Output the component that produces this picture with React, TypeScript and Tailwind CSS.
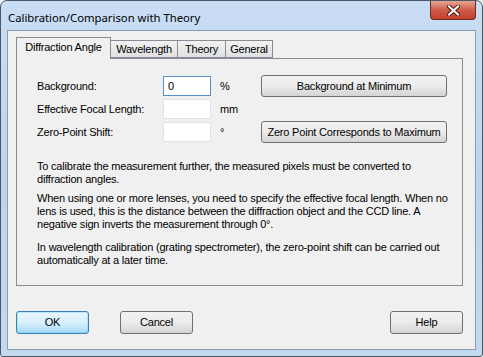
export default function App() {
  const tabs = [
    { label: "Wavelength", w: "w-[67px]" },
    { label: "Theory", w: "w-[48px]" },
    { label: "General", w: "w-[47px]" },
  ];

  return (
    <div className="w-[483px] h-[357px] bg-[#f0f0f0] font-['Liberation_Sans',Arial,sans-serif]">
      <div className="w-[483px] h-[357px] flex flex-col border border-[#4a5866] rounded-t-[7px] rounded-b-[3px] bg-gradient-to-b from-[#c9def5] via-[#bcd4ee] to-[#c3d9f0] px-[6px] pb-[6px]">
        {/* title bar */}
        <div className="h-[29px] flex items-start relative">
          <span className="pt-[9px] pl-[1px] text-[11.3px] leading-[15px] text-black font-['Noto_Sans',sans-serif]">
            Calibration/Comparison with Theory
          </span>
          <div className="absolute right-[0px] top-0 w-[46px] h-[19px] rounded-b-[4px] border border-t-0 border-[#6b2a22] bg-gradient-to-b from-[#e3a594] via-[#cf5b48] to-[#c5402d] flex items-center justify-center">
            <svg width="13" height="11" viewBox="0 0 13 11">
              <path d="M2 1.5 L11 9.5 M11 1.5 L2 9.5" stroke="#4a1a14" strokeWidth="4" strokeLinecap="square" />
              <path d="M2 1.5 L11 9.5 M11 1.5 L2 9.5" stroke="#ffffff" strokeWidth="2" strokeLinecap="square" />
            </svg>
          </div>
        </div>

        {/* client area */}
        <div className="flex-1 border border-[#8b9bb0] bg-[#f0f0f0] pl-[8px] pr-[12px] pt-[6px] text-[11px] tracking-[-0.2px] text-black whitespace-nowrap">
          <div className="flex items-end">
            <div className="h-[22px] w-[95px] -mb-px relative z-10 border border-b-0 border-[#898c95] bg-[#f0f0f0] flex items-center justify-center pb-[2px]">
              Diffraction Angle
            </div>
            {tabs.map((t) => (
              <div
                key={t.label}
                className={`${t.w} h-[18px] border border-l-0 border-[#898c95] bg-gradient-to-b from-[#f2f2f2] to-[#e0e0e0] flex items-center justify-center`}
              >
                {t.label}
              </div>
            ))}
          </div>

          <div className="h-[228px] border border-[#898c95] bg-[#f0f0f0] pl-[20px] pt-[16px]">
            <div className="flex flex-col gap-[1px]">
              <div className="h-[22px] flex items-center">
                <span className="w-[126px]">Background:</span>
                <div className="w-[48px] h-[20px] border border-[#5b8fc4] bg-white pl-[4px] flex items-center">0</div>
                <span className="w-[50px] pl-[9px]">%</span>
                <button className="w-[186px] h-[22px] rounded-[3px] border border-[#707070] bg-gradient-to-b from-[#f2f2f2] via-[#ebebeb] to-[#d4d4d4]">
                  Background at Minimum
                </button>
              </div>
              <div className="h-[22px] flex items-center">
                <span className="w-[126px]">Effective Focal Length:</span>
                <div className="w-[48px] h-[20px] border border-[#e2e3ea] bg-white" />
                <span className="w-[50px] pl-[9px]">mm</span>
              </div>
              <div className="h-[22px] flex items-center">
                <span className="w-[126px]">Zero-Point Shift:</span>
                <div className="w-[48px] h-[20px] border border-[#e2e3ea] bg-white" />
                <span className="w-[50px] pl-[9px]">°</span>
                <button className="w-[186px] h-[22px] rounded-[3px] border border-[#707070] bg-gradient-to-b from-[#f2f2f2] via-[#ebebeb] to-[#d4d4d4]">
                  Zero Point Corresponds to Maximum
                </button>
              </div>
            </div>

            <div className="mt-[17px] leading-[13px]">
              <p>
                To calibrate the measurement further, the measured pixels must be converted to
                <br />
                diffraction angles.
              </p>
              <p className="mt-[6px]">
                When using one or more lenses, you need to specify the effective focal length. When no
                <br />
                lens is used, this is the distance between the diffraction object and the CCD line. A
                <br />
                negative sign inverts the measurement through 0°.
              </p>
              <p className="mt-[10px]">
                In wavelength calibration (grating spectrometer), the zero-point shift can be carried out
                <br />
                automatically at a later time.
              </p>
            </div>
          </div>

          <div className="mt-[25px] flex items-center">
            <button className="w-[73px] h-[23px] rounded-[3px] border border-[#3c7fb1] bg-gradient-to-b from-[#eaf6fd] via-[#d9f0fc] to-[#a7d9f5] shadow-[inset_0_0_0_1px_#48d1ff55]">
              OK
            </button>
            <button className="ml-[31px] w-[73px] h-[23px] rounded-[3px] border border-[#707070] bg-gradient-to-b from-[#f2f2f2] via-[#ebebeb] to-[#d4d4d4]">
              Cancel
            </button>
            <button className="ml-auto w-[73px] h-[23px] rounded-[3px] border border-[#707070] bg-gradient-to-b from-[#f2f2f2] via-[#ebebeb] to-[#d4d4d4]">
              Help
            </button>
          </div>
        </div>
      </div>
    </div>
  );
}
